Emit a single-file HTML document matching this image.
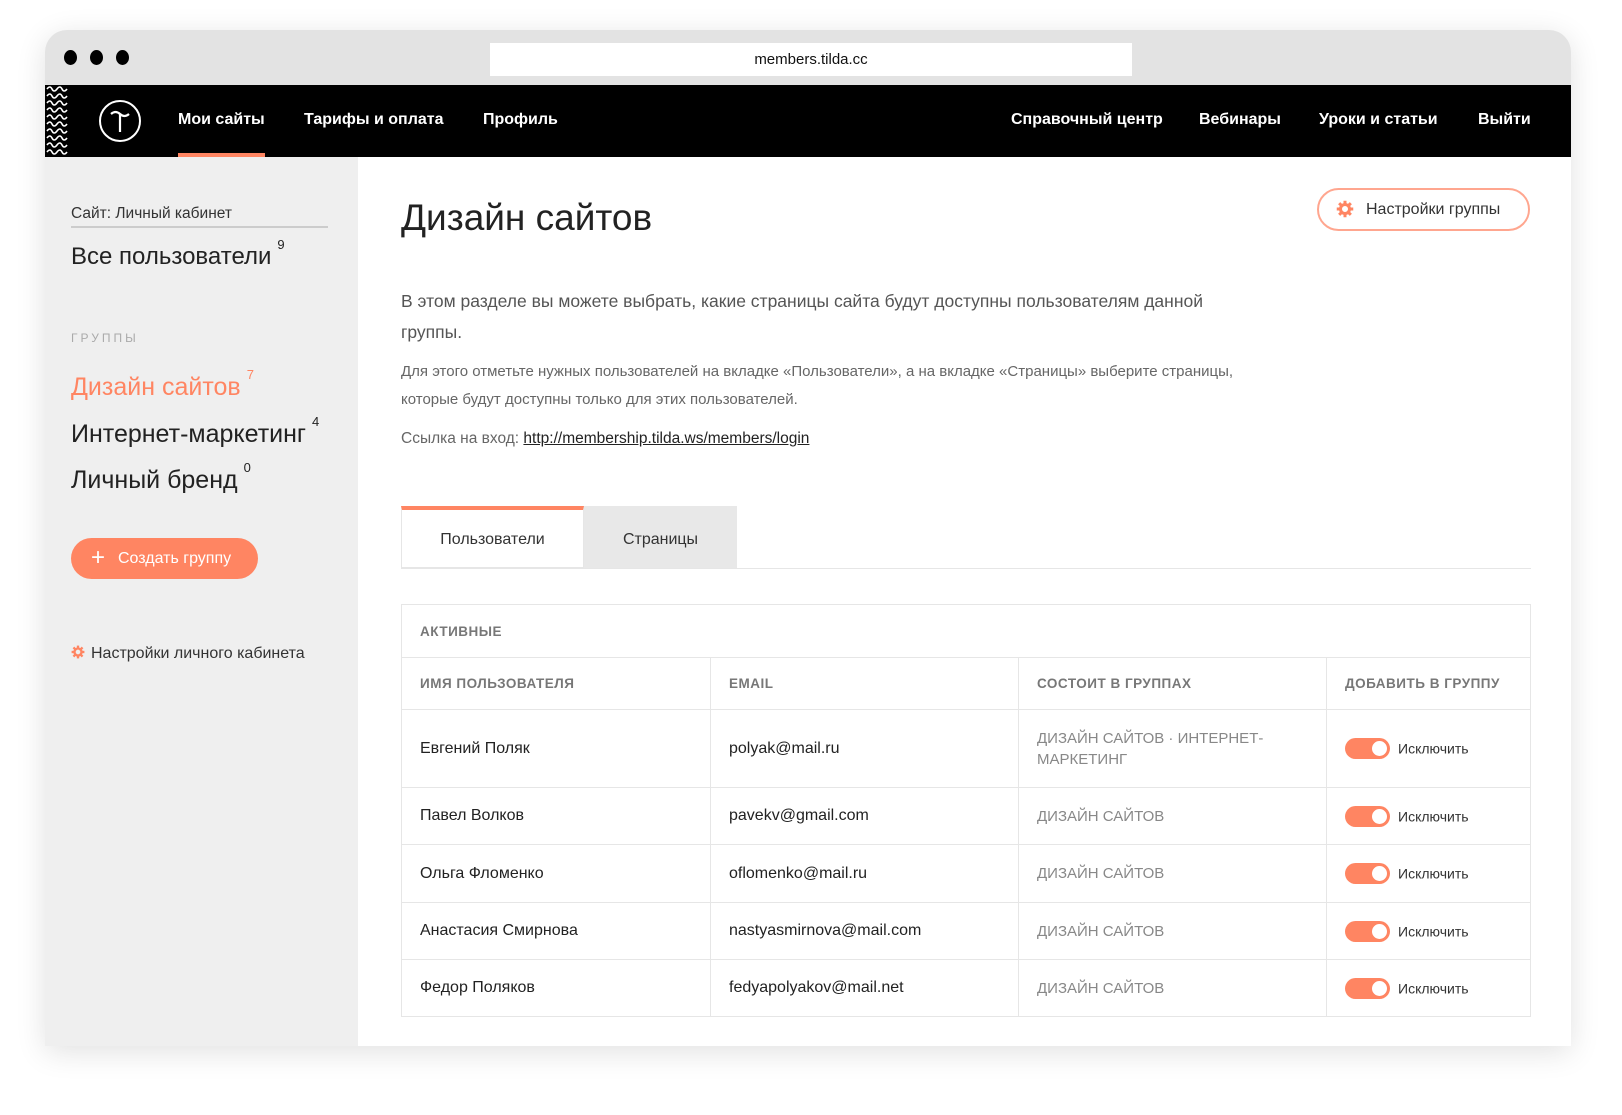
<!DOCTYPE html>
<html><head><meta charset="utf-8">
<style>
*{margin:0;padding:0;box-sizing:border-box}
body{width:1622px;height:1115px;background:#fff;font-family:"Liberation Sans","Noto Sans CJK SC",sans-serif;position:relative;overflow:hidden;color:#222}
.win{position:absolute;left:45px;top:30px;width:1526px;height:1016px;border-radius:22px 22px 0 0;box-shadow:0 6px 30px rgba(0,0,0,.12);background:#fff;overflow:hidden}
.top{position:absolute;left:0;top:0;width:100%;height:55px;background:#e3e3e3}
.dot{position:absolute;top:20px;width:13px;height:15px;border-radius:50%;background:#000}
.url{position:absolute;left:445px;top:13px;width:642px;height:33px;background:#fff;text-align:center;font-size:15px;line-height:33px;color:#111}
.hdr{position:absolute;left:0;top:55px;width:100%;height:72px;background:#000}
.hdr a{position:absolute;top:0;line-height:70px;color:#fff;font-size:16px;font-weight:bold;text-decoration:none}
.side{position:absolute;left:0;top:127px;width:313px;height:900px;background:#efefef}
.s{position:absolute;white-space:nowrap}
sup{font-size:13px;vertical-align:top;position:relative;top:-6px;margin-left:6px}
.main{position:absolute;left:313px;top:127px;right:0;bottom:0;background:#fff}
table{position:absolute;left:43px;top:447px;width:1130px;border-collapse:collapse;font-size:16px}
td{border:1px solid #e6e6e6;padding:0 0 0 18px;vertical-align:middle}
.hd td{font-size:13.5px;color:#777;letter-spacing:.5px;font-weight:bold}
.g{color:#888;font-size:15px}
.tg{display:inline-block;width:45px;height:21px;border-radius:11px;background:#ff8562;position:relative;vertical-align:middle;margin-right:8px}
.tg:after{content:"";position:absolute;right:3px;top:3px;width:15px;height:15px;border-radius:50%;background:#fff}
.ex{font-size:14px;color:#333;vertical-align:middle}
</style></head><body>
<svg width="0" height="0" style="position:absolute"><defs>
<g id="gear"><g fill="#ff8562"><rect x="10" y="1" width="4" height="5"/><rect x="10" y="18" width="4" height="5"/><rect x="1" y="10" width="5" height="4"/><rect x="18" y="10" width="5" height="4"/>
<rect x="10" y="1" width="4" height="5" transform="rotate(45 12 12)"/><rect x="10" y="18" width="4" height="5" transform="rotate(45 12 12)"/><rect x="1" y="10" width="5" height="4" transform="rotate(45 12 12)"/><rect x="18" y="10" width="5" height="4" transform="rotate(45 12 12)"/></g>
<circle cx="12" cy="12" r="6" fill="none" stroke="#ff8562" stroke-width="4"/></g></defs></svg>
<div class="win">
 <div class="top">
  <div class="dot" style="left:19px"></div><div class="dot" style="left:45px"></div><div class="dot" style="left:71px"></div>
  <div class="url">members.tilda.cc</div>
 </div>
 <div class="hdr">
  <svg style="position:absolute;left:0;top:0" width="25" height="72">
   <g stroke="#fff" stroke-width="1.6" fill="none">
   <path d="M2 4 q3 -4 5 0 t5 0 t5 0 t5 0"/><path d="M2 11 q3 -4 5 0 t5 0 t5 0 t5 0"/><path d="M2 18 q3 -4 5 0 t5 0 t5 0 t5 0"/><path d="M2 25 q3 -4 5 0 t5 0 t5 0 t5 0"/><path d="M2 32 q3 -4 5 0 t5 0 t5 0 t5 0"/><path d="M2 39 q3 -4 5 0 t5 0 t5 0 t5 0"/><path d="M2 46 q3 -4 5 0 t5 0 t5 0 t5 0"/><path d="M2 53 q3 -4 5 0 t5 0 t5 0 t5 0"/><path d="M2 60 q3 -4 5 0 t5 0 t5 0 t5 0"/><path d="M2 67 q3 -4 5 0 t5 0 t5 0 t5 0"/>
   </g></svg>
  <svg style="position:absolute;left:53px;top:14px" width="44" height="44"><circle cx="22" cy="22" r="20" stroke="#fff" stroke-width="2" fill="none"/><path d="M13 15 q4.5 -4 9 0 t9 0 M22 15 V33" stroke="#fff" stroke-width="2.2" fill="none"/></svg>
  <a style="left:133px">Мои сайты</a>
  <div style="position:absolute;left:133px;top:68px;width:87px;height:4px;background:#ff8562"></div>
  <a style="left:259px">Тарифы и оплата</a>
  <a style="left:438px">Профиль</a>
  <a style="left:966px">Справочный центр</a>
  <a style="left:1154px">Вебинары</a>
  <a style="left:1274px">Уроки и статьи</a>
  <a style="left:1433px">Выйти</a>
 </div>
 <div class="side">
  <div class="s" style="left:26px;top:48px;font-size:15.5px;color:#333">Сайт: Личный кабинет</div>
  <div style="position:absolute;left:26px;top:69px;width:257px;height:2px;background:#ccc"></div>
  <div class="s" style="left:26px;top:86px;font-size:24px;color:#222">Все пользователи<sup>9</sup></div>
  <div class="s" style="left:26px;top:174px;font-size:12px;color:#aaa;letter-spacing:3px">ГРУППЫ</div>
  <div class="s" style="left:26px;top:216px;font-size:25px;color:#ff8562">Дизайн сайтов<sup>7</sup></div>
  <div class="s" style="left:26px;top:263px;font-size:25px;color:#222">Интернет-маркетинг<sup>4</sup></div>
  <div class="s" style="left:26px;top:309px;font-size:25px;color:#222">Личный бренд<sup>0</sup></div>
  <div style="position:absolute;left:26px;top:381px;width:187px;height:41px;border-radius:21px;background:#ff8562;color:#fff;font-size:16px;line-height:41px;padding-left:47px">Создать группу
   <span style="position:absolute;left:20px;top:0;font-size:24px;line-height:39px">+</span></div>
  <div class="s" style="left:26px;top:488px;font-size:16px;color:#333"><svg width="14" height="14" viewBox="0 0 24 24" style="vertical-align:-1px;margin-right:6px"><use href="#gear"/></svg>Настройки личного кабинета</div>
 </div>
 <div class="main">
  <div class="s" style="left:43px;top:40px;font-size:37px;color:#222">Дизайн сайтов</div>
  <div style="position:absolute;left:959px;top:31px;width:213px;height:43px;border:2px solid #ffa68f;border-radius:22px;font-size:16px;line-height:39px;color:#333;padding-left:47px">
   <svg width="18" height="18" viewBox="0 0 24 24" style="position:absolute;left:17px;top:10px"><use href="#gear"/></svg>Настройки группы</div>
  <div style="position:absolute;left:43px;top:129px;width:860px;font-size:17.5px;line-height:31px;color:#555">В этом разделе вы можете выбрать, какие страницы сайта будут доступны пользователям данной группы.</div>
  <div style="position:absolute;left:43px;top:201px;width:850px;font-size:15px;line-height:28px;color:#666">Для этого отметьте нужных пользователей на вкладке «Пользователи», а на вкладке «Страницы» выберите страницы, которые будут доступны только для этих пользователей.</div>
  <div class="s" style="left:43px;top:273px;font-size:15.5px;color:#666">Ссылка на вход: <span style="color:#222;text-decoration:underline">http://membership.tilda.ws/members/login</span></div>
  <div style="position:absolute;left:43px;top:349px;width:183px;height:62px;border:1px solid #e6e6e6;border-top:4px solid #ff8562;text-align:center;line-height:60px;font-size:16px;color:#333">Пользователи</div>
  <div style="position:absolute;left:226px;top:349px;width:153px;height:62px;background:#e8e8e8;text-align:center;line-height:68px;font-size:16px;color:#333">Страницы</div>
  <div style="position:absolute;left:43px;top:411px;width:1130px;height:1px;background:#e6e6e6"></div>
  <table>
   <tr style="height:53px" class="hd"><td colspan="4">АКТИВНЫЕ</td></tr>
   <tr style="height:52px" class="hd"><td style="width:309px">ИМЯ ПОЛЬЗОВАТЕЛЯ</td><td style="width:308px">EMAIL</td><td style="width:308px">СОСТОИТ В ГРУППАХ</td><td>ДОБАВИТЬ В ГРУППУ</td></tr>
   <tr style="height:78px"><td>Евгений Поляк</td><td>polyak@mail.ru</td><td class="g" style="line-height:21px">ДИЗАЙН САЙТОВ · ИНТЕРНЕТ-<br>МАРКЕТИНГ</td><td><span class="tg"></span><span class="ex">Исключить</span></td></tr>
   <tr style="height:57px"><td>Павел Волков</td><td>pavekv@gmail.com</td><td class="g">ДИЗАЙН САЙТОВ</td><td><span class="tg"></span><span class="ex">Исключить</span></td></tr>
   <tr style="height:58px"><td>Ольга Фломенко</td><td>oflomenko@mail.ru</td><td class="g">ДИЗАЙН САЙТОВ</td><td><span class="tg"></span><span class="ex">Исключить</span></td></tr>
   <tr style="height:57px"><td>Анастасия Смирнова</td><td>nastyasmirnova@mail.com</td><td class="g">ДИЗАЙН САЙТОВ</td><td><span class="tg"></span><span class="ex">Исключить</span></td></tr>
   <tr style="height:57px"><td>Федор Поляков</td><td>fedyapolyakov@mail.net</td><td class="g">ДИЗАЙН САЙТОВ</td><td><span class="tg"></span><span class="ex">Исключить</span></td></tr>
  </table>
 </div>
</div>
</body></html>
